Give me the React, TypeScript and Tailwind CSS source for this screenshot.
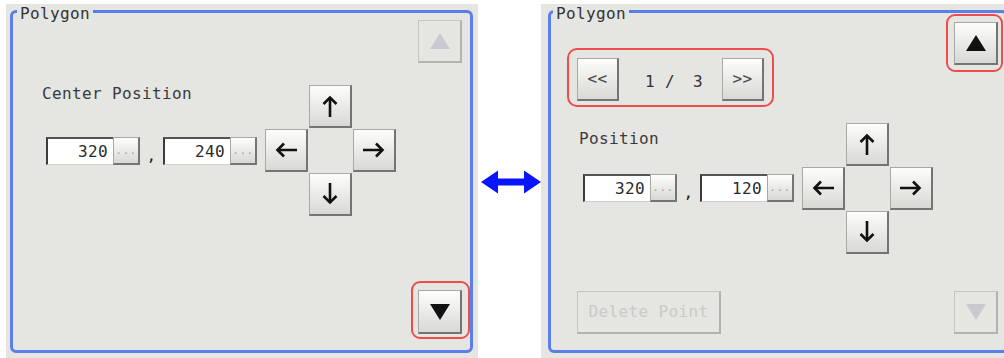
import React from "react";

const FONT = "font-['DejaVu_Sans_Mono',monospace] text-[16px] leading-[16px] tracking-[0.37px]";

const raised =
  "bg-linear-to-b from-[#fdfdfc] to-[#d8d8d4] border border-[#a8a8a5] border-r-2 border-b-2 border-r-[#747472] border-b-[#747472]";
const disabledCls =
  "bg-[#e5e5e1] border border-[#c4c4c0] border-r-2 border-b-2 border-r-[#b2b2ae] border-b-[#b2b2ae]";

const rot: Record<string, string> = {
  up: "",
  right: "rotate-90",
  down: "rotate-180",
  left: "-rotate-90",
};

function Arrow({ dir }: { dir: "up" | "down" | "left" | "right" }) {
  return (
    <svg width="24" height="24" viewBox="0 0 24 24" className={rot[dir]}>
      <path d="M12 23V3.5" stroke="#111" strokeWidth="2.6" fill="none" />
      <path d="M5.5 10L12 3.5L18.5 10" stroke="#111" strokeWidth="2.6" fill="none" />
    </svg>
  );
}

function Tri({ down, color }: { down?: boolean; color: string }) {
  return (
    <svg width="20" height="16" viewBox="0 0 20 16">
      <polygon points={down ? "0,0 20,0 10,16" : "10,0 20,16 0,16"} fill={color} />
    </svg>
  );
}

function Btn({ children, w = "w-[43px]", h = "h-[43px]" }: { children: React.ReactNode; w?: string; h?: string }) {
  return <div className={`${w} ${h} ${raised} flex items-center justify-center text-[#444]`}>{children}</div>;
}

function Pad() {
  return (
    <div className="grid grid-cols-[43px_43px_43px] grid-rows-[43px_43px_43px] gap-px">
      <div />
      <Btn>
        <Arrow dir="up" />
      </Btn>
      <div />
      <Btn>
        <Arrow dir="left" />
      </Btn>
      <div />
      <Btn>
        <Arrow dir="right" />
      </Btn>
      <div />
      <Btn>
        <Arrow dir="down" />
      </Btn>
      <div />
    </div>
  );
}

function Field({ value }: { value: string }) {
  return (
    <div className="flex h-[28px]">
      <div className="w-[67px] bg-white border-l-2 border-t-2 border-l-[#3c3c3c] border-t-[#555] border-b border-b-[#cfcfcf] flex items-center justify-end pr-[5px] text-[#2a2a2a]">
        {value}
      </div>
      <div
        className={`w-[27px] ${raised} flex items-end justify-center pb-[7px] text-[#9aa2ad] text-[11px] leading-none tracking-[0.5px]`}
      >
        ...
      </div>
    </div>
  );
}

function Coords({ x, y }: { x: string; y: string }) {
  return (
    <div className="flex">
      <Field value={x} />
      <div className="w-[23px] flex items-end justify-center pb-[1px] text-[#222]">,</div>
      <Field value={y} />
    </div>
  );
}

function Ring({ cls }: { cls: string }) {
  return <div className={`absolute ${cls} rounded-[9px] border-2 border-[#f04c4c] pointer-events-none`} />;
}

function Legend({ cls }: { cls: string }) {
  return <div className={`absolute ${cls} px-[3px] bg-[#e5e5e1] text-[#333]`}>Polygon</div>;
}

export default function App() {
  return (
    <div className={`w-[1004px] h-[358px] bg-white flex overflow-hidden ${FONT}`}>
      {/* Left panel */}
      <div className="mt-[4px] ml-[6px] w-[472px] h-[354px] shrink-0 bg-[#e5e5e1] pt-[6px] pl-[4px]">
        <div className="relative w-[463px] h-[343px] border-[3px] border-[#5b7fe9] rounded-[6px] flex items-start">
          <Legend cls="left-[4px] -top-[7px]" />
          <div className="ml-[29px] mt-[73px] flex flex-col items-start">
            <div className="text-[#3a3a3a]">Center Position</div>
            <div className="mt-[35px] ml-[4px]">
              <Coords x="320" y="240" />
            </div>
          </div>
          <div className="ml-[8px] mt-[72px]">
            <Pad />
          </div>
          <div className="ml-auto mr-[8px] mt-[7px] h-[314px] flex flex-col justify-between">
            <div className={`w-[44px] h-[43px] ${disabledCls} flex items-center justify-center`}>
              <Tri color="#c9cad0" />
            </div>
            <div className="relative">
              <Ring cls="-left-[7px] -right-[8px] -top-[9px] -bottom-[5px]" />
              <div className={`w-[44px] h-[44px] ${raised} flex items-center justify-center`}>
                <Tri down color="#111" />
              </div>
            </div>
          </div>
        </div>
      </div>

      {/* Middle arrow */}
      <div className="w-[63px] shrink-0 pt-[170px] pl-[3px]">
        <svg width="60" height="24" viewBox="0 0 60 24">
          <polygon
            points="0,12 17,0.5 17,8.5 43,8.5 43,0.5 60,12 43,23.5 43,15.5 17,15.5 17,23.5"
            fill="#0a14ff"
          />
        </svg>
      </div>

      {/* Right panel */}
      <div className="mt-[4px] w-[470px] h-[354px] shrink-0 bg-[#e5e5e1] pt-[6px] pl-[7px]">
        <div className="relative w-[460px] h-[343px] border-[3px] border-[#5b7fe9] rounded-[6px] flex items-start">
          <Legend cls="left-[2px] -top-[7px]" />
          <div className="ml-[16px] mt-[35px] flex flex-col items-start">
            <div className="flex items-start border-2 border-[#f04c4c] rounded-[10px] pl-[8px] pr-[8px] pt-[8px] pb-[4px]">
              <Btn w="w-[42px]">
                <span className="text-[#4a4a4a]">&lt;&lt;</span>
              </Btn>
              <div className="h-[43px] flex items-center pt-[4px] text-[#333]">
                <span className="ml-[26px] w-[10px]">1</span>
                <span className="ml-[10px] w-[10px]">/</span>
                <span className="ml-[18px] w-[10px]">3</span>
              </div>
              <div className="ml-[19px]">
                <Btn w="w-[42px]">
                  <span className="text-[#4a4a4a]">&gt;&gt;</span>
                </Btn>
              </div>
            </div>
            <div className="ml-[12px] mt-[24px] text-[#3a3a3a]">Position</div>
            <div className="ml-[16px] mt-[27px]">
              <Coords x="320" y="120" />
            </div>
            <div
              className={`ml-[10px] mt-[89px] w-[144px] h-[43px] ${disabledCls} flex items-center justify-center text-[#cacac6]`}
            >
              Delete Point
            </div>
          </div>
          <div className="ml-[8px] mt-[110px]">
            <Pad />
          </div>
          <div className="ml-auto mr-[7px] mt-[9px] h-[312px] flex flex-col justify-between">
            <div className="relative">
              <Ring cls="-left-[8px] -right-[5px] -top-[8px] -bottom-[7px]" />
              <div className={`w-[44px] h-[43px] ${raised} flex items-center justify-center`}>
                <Tri color="#111" />
              </div>
            </div>
            <div className={`w-[44px] h-[43px] ${disabledCls} flex items-center justify-center`}>
              <Tri down color="#c9cad0" />
            </div>
          </div>
        </div>
      </div>
    </div>
  );
}
